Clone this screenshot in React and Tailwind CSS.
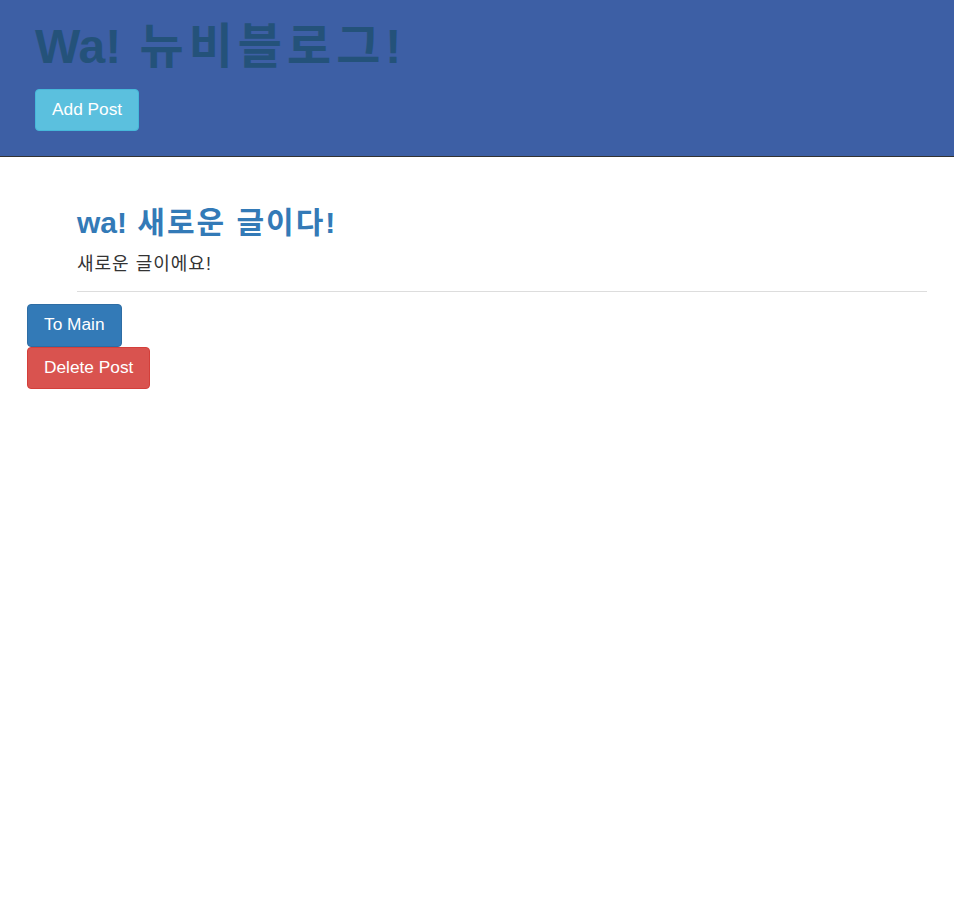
export default function App() {
  const font = { fontFamily: '"Liberation Sans", Arial, "Noto Sans CJK KR", sans-serif' };
  return (
    <div className="min-h-[909px] bg-white" style={font}>
      <div className="h-[157px] bg-[#3d5fa5] border-b border-[#333] px-[35px] pt-[14px]">
        <h1 className="text-[48px] leading-[66px] font-bold text-[#24527a]">Wa!<span className="tracking-[5px]"> 뉴비블로그</span>!</h1>
        <button className="mt-[9px] h-[42px] px-[16px] pb-[3px] rounded-[4px] bg-[#5bc0de] border border-[#46b8da] text-white text-[17.3px] leading-[24px]">Add Post</button>
      </div>
      <div className="pl-[77px] pr-[27px] pt-[46px]">
        <h2 className="text-[30px] leading-[40px] font-bold text-[#337ab7]">wa!<span className="tracking-[2px]"> 새로운 글이다</span>!</h2>
        <p className="mt-[8px] text-[18px] leading-[26px] text-[#333]"><span className="tracking-[1px]">새로운 글이에요</span>!</p>
        <hr className="mt-[14px] border-t border-[#ddd]" />
      </div>
      <div className="pl-[27px] pt-[12px] flex flex-col items-start">
        <button className="h-[43px] px-[16px] pb-[3px] rounded-[4px] bg-[#337ab7] border border-[#2e6da4] text-white text-[17.3px] leading-[24px]">To Main</button>
        <button className="h-[42px] px-[16px] pb-[3px] rounded-[4px] bg-[#d9534f] border border-[#d43f3a] text-white text-[17.3px] leading-[24px]">Delete Post</button>
      </div>
    </div>
  );
}
